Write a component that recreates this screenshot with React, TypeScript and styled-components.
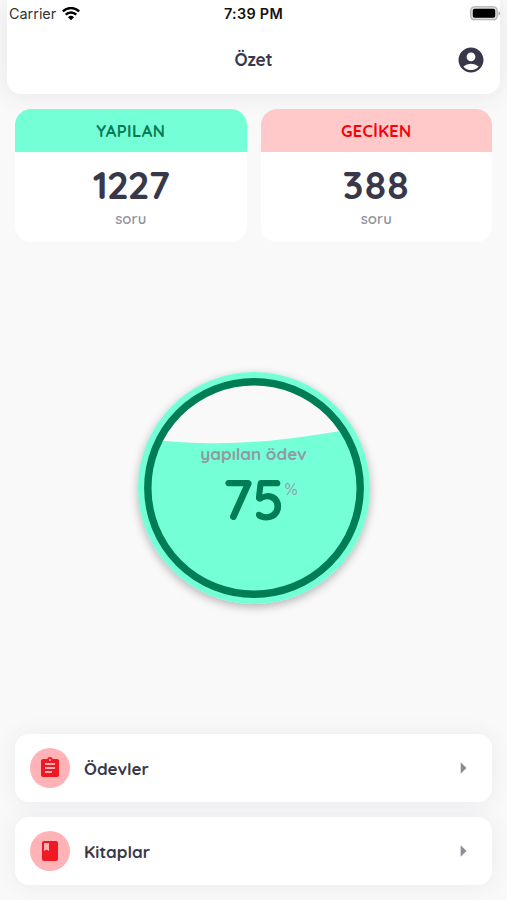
import React from "react";
import styled, { createGlobalStyle } from "styled-components";
import { MdAccountCircle, MdAssignment, MdBook, MdArrowRight } from "react-icons/md";

const GlobalStyle = createGlobalStyle`
  * { box-sizing: border-box; }
  body {
    margin: 0;
    background: #f9f9f9;
    font-family: Quicksand, Lato, sans-serif;
    color: #38384a;
  }
`;

const Screen = styled.main`
  display: flex;
  flex-direction: column;
  width: 507px;
  height: 900px;
  overflow: hidden;
  background: #f9f9f9;
`;

const Header = styled.header`
  flex: none;
  height: 94px;
  margin: 0 7px;
  background: #fff;
  border-radius: 0 0 14px 14px;
  box-shadow: 0 1px 24px rgba(70, 70, 110, 0.1);
`;

const StatusBar = styled.div`
  display: grid;
  grid-template-columns: 1fr auto 1fr;
  align-items: center;
  height: 27px;
  padding-left: 2px;
  font-family: Inter, sans-serif;
  font-size: 14.4px;
  color: #111;
`;

const Carrier = styled.div`
  display: flex;
  align-items: center;
  gap: 6px;
  color: #333;
`;

const Clock = styled.div`
  position: relative;
  left: -1px;
  font-weight: 600;
  letter-spacing: 0.3px;
`;

const Battery = styled.svg`
  justify-self: end;
  margin-right: -1px;
`;

const TitleBar = styled.div`
  display: grid;
  grid-template-columns: 1fr auto 1fr;
  align-items: center;
  height: 66px;
  padding-right: 14px;
  padding-left: 14px;
`;

const Title = styled.h1`
  grid-column: 2;
  margin: -2px 0 0;
  font-size: 17.3px;
  font-weight: 700;
  letter-spacing: -0.1px;
`;

const Profile = styled(MdAccountCircle)`
  justify-self: end;
`;

const Stats = styled.section`
  display: grid;
  grid-template-columns: 1fr 1fr;
  gap: 14px;
  flex: none;
  padding: 15px 15px 0;
`;

const StatCard = styled.article`
  height: 133px;
  overflow: hidden;
  text-align: center;
  background: #fff;
  border-radius: 16px;
`;

const StatLabel = styled.h2<{ $late?: boolean }>`
  margin: 0;
  height: 43px;
  font-size: 16.5px;
  line-height: 43px;
  font-weight: 700;
  letter-spacing: ${(p) => (p.$late ? "0.35px" : "0.4px")};
  color: ${(p) => (p.$late ? "#fb0007" : "#087b55")};
  background: ${(p) => (p.$late ? "#ffc9ca" : "#75ffd6")};
`;

const StatValue = styled.div<{ $spacing: string }>`
  margin-top: 9px;
  font-size: 39px;
  line-height: 48px;
  font-weight: 700;
  letter-spacing: ${(p) => p.$spacing};
`;

const StatUnit = styled.div`
  font-size: 14.8px;
  line-height: 19px;
  font-weight: 600;
  color: #92929b;
`;

const GaugeArea = styled.section`
  flex: 1;
  display: flex;
  align-items: center;
  justify-content: center;
`;

const Gauge = styled.div`
  position: relative;
  width: 232px;
  height: 232px;
  border-radius: 50%;
  box-shadow: 0 3px 10px rgba(0, 0, 0, 0.28);
`;

const GaugeArt = styled.svg`
  display: block;
`;

const GaugeText = styled.div`
  position: absolute;
  inset: 0;
  display: flex;
  flex-direction: column;
  align-items: center;
  padding-top: 70px;
`;

const GaugeLabel = styled.div`
  font-size: 17px;
  line-height: 24px;
  font-weight: 700;
  color: #8f9b9f;
`;

const GaugeFigure = styled.div`
  display: flex;
  align-items: flex-start;
  padding-left: 13px;
  color: #007d55;
`;

const GaugeNumber = styled.span`
  font-size: 56px;
  line-height: 67px;
  font-weight: 700;
  letter-spacing: -0.8px;
`;

const Percent = styled.span`
  margin-top: 13px;
  margin-left: 1px;
  font-size: 17px;
  line-height: 20px;
  color: #8f9b9f;
`;

const Menu = styled.nav`
  display: flex;
  flex-direction: column;
  gap: 15px;
  flex: none;
  padding: 0 15px 15px;
`;

const MenuItem = styled.a`
  display: flex;
  align-items: center;
  height: 68px;
  padding: 0 15px;
  border-radius: 14px;
  background: #fff;
  box-shadow: 0 1px 22px rgba(70, 70, 110, 0.075);
`;

const MenuIcon = styled.span`
  display: grid;
  place-items: center;
  width: 40px;
  height: 40px;
  margin-right: 14px;
  border-radius: 50%;
  background: #ffb3b6;
  color: #f01822;
`;

const MenuLabel = styled.span`
  flex: 1;
  font-size: 17px;
  font-weight: 700;
`;

const items = [
  { label: "Ödevler", Icon: MdAssignment },
  { label: "Kitaplar", Icon: MdBook },
];

export default function App() {
  return (
    <>
      <GlobalStyle />
      <Screen>
        <Header>
          <StatusBar>
            <Carrier>
              Carrier
              <svg width="18" height="14" viewBox="0 0 18 14">
                <g fill="none" stroke="#000" strokeWidth="2.5">
                  <path d="M.8 4.4a11.8 11.8 0 0 1 16.4 0" />
                  <path d="M3.7 7.7a7.6 7.6 0 0 1 10.6 0" />
                </g>
                <path d="M9 13.2 6 10.2a4.3 4.3 0 0 1 6 0z" />
              </svg>
            </Carrier>
            <Clock>7:39 PM</Clock>
            <Battery width="31" height="15" viewBox="0 0 31 15">
              <rect x=".7" y=".8" width="26.5" height="13" rx="3.6" fill="#ddd" stroke="#aaa" strokeWidth="1.1" />
              <rect x="2.8" y="2.8" width="22.4" height="9" rx="1.8" />
              <path d="M28.5 5.2v4.4c2.2-.8 2.2-3.6 0-4.4z" fill="#aaa" />
            </Battery>
          </StatusBar>
          <TitleBar>
            <Title>Özet</Title>
            <Profile size={30} />
          </TitleBar>
        </Header>

        <Stats>
          <StatCard>
            <StatLabel>YAPILAN</StatLabel>
            <StatValue $spacing="-1.3px">1227</StatValue>
            <StatUnit>soru</StatUnit>
          </StatCard>
          <StatCard>
            <StatLabel $late>GECİKEN</StatLabel>
            <StatValue $spacing="1.3px">388</StatValue>
            <StatUnit>soru</StatUnit>
          </StatCard>
        </Stats>

        <GaugeArea>
          <Gauge>
            <GaugeArt width="232" height="232" viewBox="0 0 232 232">
              <circle cx="116" cy="116" r="116" fill="#75ffd6" />
              <clipPath id="gauge-bowl">
                <circle cx="116" cy="116" r="106" />
              </clipPath>
              <path d="M0 0H232V54C155 67 95 78 0 66Z" fill="#f9f9f9" clipPath="url(#gauge-bowl)" />
              <circle cx="116" cy="116" r="106.2" fill="none" stroke="#007d55" strokeWidth="7.4" />
            </GaugeArt>
            <GaugeText>
              <GaugeLabel>yapılan ödev</GaugeLabel>
              <GaugeFigure>
                <GaugeNumber>75</GaugeNumber>
                <Percent>%</Percent>
              </GaugeFigure>
            </GaugeText>
          </Gauge>
        </GaugeArea>

        <Menu>
          {items.map(({ label, Icon }) => (
            <MenuItem key={label}>
              <MenuIcon>
                <Icon size={24} />
              </MenuIcon>
              <MenuLabel>{label}</MenuLabel>
              <MdArrowRight size={28} color="#8c8c96" />
            </MenuItem>
          ))}
        </Menu>
      </Screen>
    </>
  );
}
